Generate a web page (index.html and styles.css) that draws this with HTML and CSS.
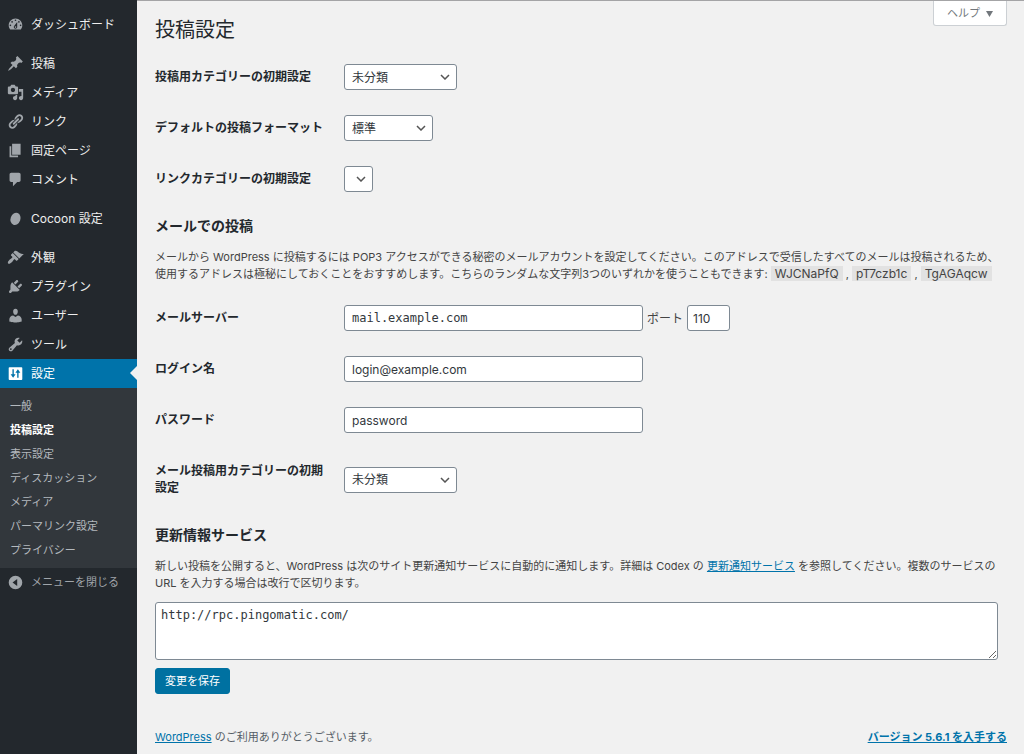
FILE: index.html
```html
<!DOCTYPE html>
<html lang="ja">
<head>
<meta charset="utf-8">
<meta name="viewport" content="width=device-width, initial-scale=1">
<title>投稿設定</title>
<link rel="stylesheet" href="styles.css">
</head>
<body>
<div class="layout">
  <nav class="sidebar" aria-label="メインメニュー">
    <ul class="menu">
      <li><a class="menu-link" href="#"><svg class="icon" viewBox="0 0 20 20" aria-hidden="true"><path fill-rule="evenodd" d="M3.76 16h12.48c1.1-1.37 1.76-3.11 1.76-5 0-4.42-3.58-8-8-8s-8 3.58-8 8c0 1.89.66 3.63 1.76 5zM10 4c.55 0 1 .45 1 1s-.45 1-1 1-1-.45-1-1 .45-1 1-1zM6 6c.55 0 1 .45 1 1s-.45 1-1 1-1-.45-1-1 .45-1 1-1zm8 0c.55 0 1 .45 1 1s-.45 1-1 1-1-.45-1-1 .45-1 1-1zm-5.37 5.55L12 7v6c0 1.1-.9 2-2 2s-2-.9-2-2c0-.57.24-1.08.63-1.45zM4 10c.55 0 1 .45 1 1s-.45 1-1 1-1-.45-1-1 .45-1 1-1zm12 0c.55 0 1 .45 1 1s-.45 1-1 1-1-.45-1-1 .45-1 1-1zm-5 3c0-.55-.45-1-1-1s-1 .45-1 1 .45 1 1 1 1-.45 1-1z"/></svg>ダッシュボード</a></li>
      <li class="group-start"><a class="menu-link" href="#"><svg class="icon" viewBox="0 0 20 20" aria-hidden="true"><path d="M10.44 3.02l1.82-1.82 6.36 6.35-1.83 1.82c-1.05-.68-2.48-.57-3.41.36l-.75.75c-.92.93-1.04 2.35-.35 3.41l-1.83 1.82-2.41-2.41-2.8 2.79c-.42.42-3.38 2.71-3.8 2.29s1.86-3.39 2.28-3.81l2.79-2.79L4.1 9.36l1.83-1.82c1.05.69 2.48.57 3.4-.36l.75-.75c.93-.92 1.05-2.35.36-3.41z"/></svg>投稿</a></li>
      <li><a class="menu-link" href="#"><svg class="icon" viewBox="0 0 20 20" aria-hidden="true"><path fill-rule="evenodd" d="M13 11V4c0-.55-.45-1-1-1h-1.67L9 1H5L3.67 3H2c-.55 0-1 .45-1 1v7c0 .55.45 1 1 1h10c.55 0 1-.45 1-1zM7 4.5c1.38 0 2.5 1.12 2.5 2.5S8.38 9.5 7 9.5 4.5 8.38 4.5 7 5.62 4.5 7 4.5zM14 6h5v10.5c0 1.38-1.12 2.5-2.5 2.5S14 17.88 14 16.5s1.12-2.5 2.5-2.5c.17 0 .34.02.5.05V9h-3V6zm-4 8.05V13h2v3.5c0 1.38-1.12 2.5-2.5 2.5S7 17.88 7 16.5 8.12 14 9.5 14c.17 0 .34.02.5.05z"/></svg>メディア</a></li>
      <li><a class="menu-link" href="#"><svg class="icon" viewBox="0 0 20 20" aria-hidden="true"><path d="M17.74 2.76c1.68 1.69 1.68 4.41 0 6.1l-1.53 1.52c-1.12 1.12-2.7 1.47-4.14 1.09l2.62-2.61.76-.77.76-.76c.84-.84.84-2.2 0-3.04-.84-.85-2.2-.85-3.04 0l-.77.76-3.38 3.38c-.37-1.44-.02-3.02 1.1-4.14l1.52-1.53c1.69-1.68 4.42-1.68 6.1 0zM8.59 13.43l5.34-5.34c.42-.42.42-1.1 0-1.52-.44-.43-1.13-.39-1.53 0l-5.33 5.34c-.42.42-.42 1.1 0 1.52.44.43 1.13.39 1.52 0zm-.76 2.29l4.14-4.15c.38 1.44.03 3.02-1.09 4.14l-1.52 1.53c-1.69 1.68-4.41 1.68-6.1 0-1.68-1.68-1.68-4.42 0-6.1l1.53-1.52c1.12-1.12 2.7-1.47 4.14-1.1l-4.14 4.15c-.85.84-.85 2.2 0 3.05.84.84 2.2.84 3.04 0z"/></svg>リンク</a></li>
      <li><a class="menu-link" href="#"><svg class="icon" viewBox="0 0 20 20" aria-hidden="true"><path d="M6 15V2h10v13H6zm-1 1h8v2H3V5h2v11z"/></svg>固定ページ</a></li>
      <li><a class="menu-link" href="#"><svg class="icon" viewBox="0 0 20 20" aria-hidden="true"><path d="M5 2h9c1.1 0 2 .9 2 2v7c0 1.1-.9 2-2 2h-2l-5 5v-5H5c-1.1 0-2-.9-2-2V4c0-1.1.9-2 2-2z"/></svg>コメント</a></li>
      <li class="group-start"><a class="menu-link" href="#"><svg class="icon" viewBox="0 0 20 20" aria-hidden="true"><ellipse cx="10" cy="10.500" rx="5.800" ry="7.300" transform="rotate(20 10 10.500)"/></svg>Cocoon 設定</a></li>
      <li class="group-start"><a class="menu-link" href="#"><svg class="icon" viewBox="0 0 20 20" aria-hidden="true"><path d="M14.48 11.06L7.41 3.99l1.5-1.5c.5-.56 2.3-.47 3.51.32 1.21.8 1.43 1.28 2.91 2.1 1.18.64 2.45 1.26 4.45.85zm-.71.71L6.7 4.7 4.93 6.47c-.39.39-.39 1.02 0 1.41l1.06 1.06c.39.39.39 1.03 0 1.42-.6.6-1.43 1.11-2.21 1.69-.35.26-.7.53-1.01.84C1.43 14.23.4 16.08 1.4 17.07c.99 1 2.84-.03 4.18-1.36.31-.31.58-.66.85-1.02.57-.78 1.08-1.61 1.69-2.21.39-.39 1.02-.39 1.41 0l1.06 1.06c.39.39 1.02.39 1.41 0z"/></svg>外観</a></li>
      <li><a class="menu-link" href="#"><svg class="icon" viewBox="0 0 20 20" aria-hidden="true"><path d="M13.11 4.36L9.87 7.6 8 5.73l3.24-3.24c.35-.34 1.05-.2 1.56.32.52.51.66 1.21.31 1.55zm-8 1.77l.91-1.12 9.01 9.01-1.19.84c-.71.71-2.63 1.16-3.82 1.16H6.14L4.9 17.26c-.59.59-1.54.59-2.12 0-.59-.58-.59-1.53 0-2.12l1.24-1.24v-3.88c0-1.13.4-3.19 1.09-3.89zm7.26 3.97l3.24-3.24c.34-.35 1.04-.21 1.55.31.52.51.66 1.21.31 1.55l-3.24 3.25z"/></svg>プラグイン</a></li>
      <li><a class="menu-link" href="#"><svg class="icon" viewBox="0 0 20 20" aria-hidden="true"><path d="M10 9.25c-2.27 0-2.73-3.44-2.73-3.44C7 4.02 7.82 2 9.97 2c2.16 0 2.98 2.02 2.71 3.81 0 0-.41 3.44-2.68 3.44zm0 2.57L12.72 10c2.39 0 4.52 2.33 4.52 4.53v2.49s-3.65 1.13-7.24 1.13c-3.65 0-7.24-1.13-7.24-1.13v-2.49c0-2.25 1.94-4.48 4.47-4.48z"/></svg>ユーザー</a></li>
      <li><a class="menu-link" href="#"><svg class="icon" viewBox="0 0 20 20" aria-hidden="true"><path fill-rule="evenodd" d="M16.68 9.77c-1.34 1.34-3.3 1.67-4.95.99l-5.41 6.52c-.99.99-2.59.99-3.58 0s-.99-2.59 0-3.57l6.52-5.42c-.68-1.65-.35-3.61.99-4.95 1.28-1.28 3.12-1.62 4.72-1.06l-2.89 2.89 2.82 2.82 2.86-2.87c.53 1.58.18 3.39-1.08 4.65zM3.81 16.21c.4.39 1.04.39 1.43 0 .4-.4.4-1.04 0-1.43-.39-.4-1.03-.4-1.43 0-.39.39-.39 1.03 0 1.43z"/></svg>ツール</a></li>
      <li>
        <a class="menu-link current" href="#" aria-current="true"><svg class="icon" viewBox="0 0 20 20" aria-hidden="true"><path fill-rule="evenodd" d="M3 2.500h14a1 1 0 0 1 1 1v13a1 1 0 0 1-1 1H3a1 1 0 0 1-1-1v-13a1 1 0 0 1 1-1zM6.400 5v6H4.300l2.900 4 2.900-4H8V5zM12 15h1.600V9h2.100l-2.900-4-2.900 4H12z"/></svg>設定</a>
        <ul class="submenu">
          <li><a href="#">一般</a></li>
          <li><a class="active" href="#" aria-current="page">投稿設定</a></li>
          <li><a href="#">表示設定</a></li>
          <li><a href="#">ディスカッション</a></li>
          <li><a href="#">メディア</a></li>
          <li><a href="#">パーマリンク設定</a></li>
          <li><a href="#">プライバシー</a></li>
        </ul>
      </li>
    </ul>
    <button class="menu-link collapse" type="button"><svg class="icon" viewBox="0 0 20 20" aria-hidden="true"><path fill-rule="evenodd" d="M10 2a8 8 0 1 1 0 16 8 8 0 0 1 0-16zM12 6l-5.500 4 5.500 4z"/></svg>メニューを閉じる</button>
  </nav>

  <main class="content">
    <header class="page-head">
      <h1>投稿設定</h1>
      <button class="help" type="button">ヘルプ <svg class="caret" viewBox="0 0 8 8" aria-hidden="true"><path d="M0 1h8L4 8z"/></svg></button>
    </header>

    <form class="settings">
      <div class="fields">
        <div class="row"><label for="cat">投稿用カテゴリーの初期設定</label><div class="control"><select id="cat" class="field wide-select"><option>未分類</option></select></div></div>
        <div class="row"><label for="format">デフォルトの投稿フォーマット</label><div class="control"><select id="format" class="field mid-select"><option>標準</option></select></div></div>
        <div class="row"><label for="linkcat">リンクカテゴリーの初期設定</label><div class="control"><select id="linkcat" class="field empty-select"></select></div></div>
      </div>

      <h2>メールでの投稿</h2>
      <p>メールから WordPress に投稿するには POP3 アクセスができる秘密のメールアカウントを設定してください。このアドレスで受信したすべてのメールは投稿されるため、使用するアドレスは極秘にしておくことをおすすめします。こちらのランダムな文字列3つのいずれかを使うこともできます: <kbd>WJCNaPfQ</kbd> , <kbd>pT7czb1c</kbd> , <kbd>TgAGAqcw</kbd></p>

      <div class="fields mail-fields">
        <div class="row"><label for="server">メールサーバー</label><div class="control"><input id="server" class="field text mono" type="text" value="mail.example.com"><label class="port-label" for="port">ポート</label><input id="port" class="field port" type="text" value="110"></div></div>
        <div class="row"><label for="login">ログイン名</label><div class="control"><input id="login" class="field text" type="text" value="login@example.com"></div></div>
        <div class="row"><label for="pass">パスワード</label><div class="control"><input id="pass" class="field text" type="text" value="password"></div></div>
        <div class="row"><label for="mailcat">メール投稿用カテゴリーの初期設定</label><div class="control"><select id="mailcat" class="field wide-select"><option>未分類</option></select></div></div>
      </div>

      <h2 id="services-title">更新情報サービス</h2>
      <p>新しい投稿を公開すると、WordPress は次のサイト更新通知サービスに自動的に通知します。詳細は Codex の <a href="#">更新通知サービス</a> を参照してください。複数のサービスの URL を入力する場合は改行で区切ります。</p>
      <textarea class="field mono" aria-labelledby="services-title">http://rpc.pingomatic.com/</textarea>
      <button class="save" type="submit">変更を保存</button>
    </form>

    <footer class="footer">
      <span><a href="#">WordPress</a> のご利用ありがとうございます。</span>
      <a class="version" href="#">バージョン 5.6.1 を入手する</a>
    </footer>
  </main>
</div>
</body>
</html>
```
FILE: styles.css
```css
* { box-sizing: border-box; }

body {
  margin: 0;
  background: #f1f1f1;
  color: #444;
  font: 11px/17px Inter, "Noto Sans CJK JP", sans-serif;
}

ul { margin: 0; padding: 0; list-style: none; }
a { color: #0073aa; }
button, input, select, textarea { font: inherit; color: inherit; margin: 0; }

.layout { display: flex; min-height: 100vh; }

/* Sidebar */
.sidebar {
  flex: 0 0 137px;
  padding-top: 10px;
  background: #23282d;
}
.menu-link {
  position: relative;
  display: flex;
  align-items: center;
  gap: 7px;
  width: 100%;
  height: 29px;
  padding: 0 0 0 7px;
  color: #eee;
  font-size: 12px;
  text-decoration: none;
  white-space: nowrap;
}
.group-start { margin-top: 10px; }
.icon { flex: none; width: 17px; height: 17px; fill: #a0a5aa; }
.menu-link.current { background: #0073aa; color: #fff; }
.current .icon { fill: #fff; }
.current::after {
  content: "";
  position: absolute;
  right: 0;
  top: 7px;
  border: 7px solid transparent;
  border-left: 0;
  border-right-color: #f1f1f1;
}
.submenu { padding: 6px 0; background: #32373c; }
.submenu a {
  display: block;
  padding-left: 10px;
  color: #b4b9be;
  line-height: 24px;
  text-decoration: none;
}
.submenu .active { color: #fff; font-weight: 700; }
.menu-link.collapse { border: 0; background: none; color: #a0a5aa; font-size: 11px; }

/* Page */
.content {
  flex: 1;
  min-width: 0;
  display: flex;
  flex-direction: column;
  padding: 0 17px 8px 18px;
  border-top: 1px solid #a4a4a6;
}
.page-head { display: flex; justify-content: space-between; align-items: flex-start; }
h1 {
  margin: 0;
  padding-top: 15px;
  color: #23282d;
  font-size: 20px;
  font-weight: 400;
  line-height: 28px;
}
.help {
  display: flex;
  align-items: center;
  gap: 6px;
  height: 25px;
  padding: 0 13px;
  border: 1px solid #ccd0d4;
  border-top: 0;
  border-radius: 0 0 3px 3px;
  background: #fff;
  color: #72777c;
}
.caret { width: 7px; height: 7px; fill: #72777c; }

/* Form */
.fields { padding-top: 7px; }
.row { display: grid; grid-template-columns: 171px 1fr; column-gap: 18px; align-items: center; }
.row > label {
  padding: 17px 0;
  color: #23282d;
  font-size: 12px;
  font-weight: 700;
}
.control { display: flex; align-items: center; padding: 13px 0 12px; font-size: 12px; }
.field {
  height: 26px;
  border: 1px solid #7e8993;
  border-radius: 3px;
  background-color: #fff;
  color: #32373c;
  font-size: 12px;
}
select.field {
  appearance: none;
  padding: 0 20px 0 7px;
  background-image: url("data:image/svg+xml,%3Csvg xmlns='http://www.w3.org/2000/svg' viewBox='0 0 10 6'%3E%3Cpath d='M1 1l4 4 4-4' fill='none' stroke='%23555' stroke-width='1.500'/%3E%3C/svg%3E");
  background-repeat: no-repeat;
  background-position: right 6px center;
  background-size: 10px 6px;
}
.wide-select { width: 113px; }
.mid-select { width: 89px; }
.empty-select { width: 29px; }
input.text { width: 299px; padding: 0 7px; }
input.port { width: 43px; padding: 0 5px; }
.port-label { margin: 0 4px; }
.field.mono { font-family: "DejaVu Sans Mono", monospace; }

h2 {
  margin: 13px 0 14px;
  color: #23282d;
  font-size: 14px;
  font-weight: 700;
  line-height: 18px;
}
p { margin: 0; }
kbd {
  padding: 0 4px;
  background: #e2e2e2;
  font: 12px/16px Inter, sans-serif;
}
.mail-fields { padding-top: 9px; }
textarea.field {
  display: block;
  width: 99%;
  height: 58px;
  margin: 10px 0 8px;
  padding: 4px 5px;
  line-height: 17px;
  resize: vertical;
}
.save {
  height: 26px;
  padding: 0 9px;
  border: 1px solid #0071a1;
  border-radius: 3px;
  background: #0071a1;
  color: #fff;
}

.footer {
  display: flex;
  justify-content: space-between;
  margin-top: auto;
  color: #555d66;
}
.version { font-weight: 700; }
```
